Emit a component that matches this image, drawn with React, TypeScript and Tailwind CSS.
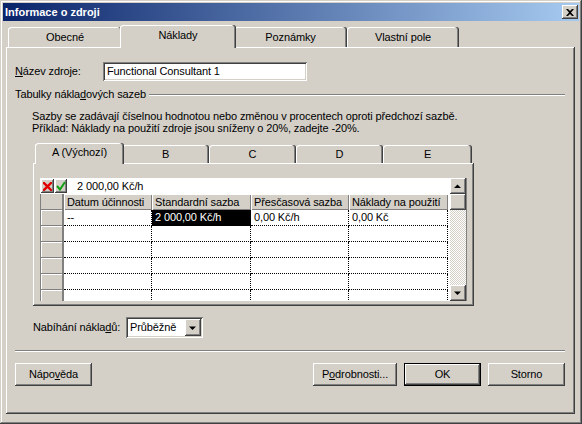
import React from "react";

const RAISED =
  "shadow-[inset_-1px_-1px_#404040,inset_1px_1px_#ffffff,inset_-2px_-2px_#808080,inset_2px_2px_#d4d0c8]";
const SUNKEN =
  "shadow-[inset_1px_1px_#808080,inset_-1px_-1px_#ffffff,inset_2px_2px_#404040,inset_-2px_-2px_#d4d0c8]";
const TAB =
  "shadow-[inset_-1px_0_#404040,inset_-2px_0_#808080,inset_1px_1px_#ffffff]";
const PANEL =
  "shadow-[inset_-1px_-1px_#404040,inset_1px_1px_#ffffff,inset_-2px_-2px_#808080]";

function Tab({
  label,
  w,
  selected,
  first,
}: {
  label: string;
  w: string;
  selected?: boolean;
  first?: boolean;
}) {
  if (selected) {
    return (
      <div
        className={`${w} ${first ? "" : "-ml-[2px]"} -mr-[2px] h-[23px] -mb-px relative z-10 bg-[#d4d0c8] rounded-t-[3px] ${TAB} flex items-center justify-center pb-[3px]`}
      >
        {label}
      </div>
    );
  }
  return (
    <div
      className={`${w} h-[20px] bg-[#d4d0c8] rounded-t-[3px] ${TAB} flex items-center justify-center`}
    >
      {label}
    </div>
  );
}

function InnerTab({
  label,
  w,
  selected,
}: {
  label: string;
  w: string;
  selected?: boolean;
}) {
  if (selected) {
    return (
      <div
        className={`${w} ml-[2px] -mr-[2px] h-[21px] -mb-px relative z-10 bg-[#d4d0c8] rounded-t-[3px] ${TAB} flex items-center justify-center pb-[2px]`}
      >
        {label}
      </div>
    );
  }
  return (
    <div
      className={`${w} h-[18px] bg-[#d4d0c8] rounded-t-[3px] ${TAB} flex items-center justify-center`}
    >
      {label}
    </div>
  );
}

function TriUp() {
  return (
    <svg width="16" height="16" viewBox="0 0 16 16">
      <polygon points="4,10 11,10 7.5,6.5" fill="#000" />
    </svg>
  );
}
function TriDown({ size = 16 }: { size?: number }) {
  return (
    <svg width={size} height={size} viewBox="0 0 16 16">
      <polygon points="4,6.5 11,6.5 7.5,10" fill="#000" />
    </svg>
  );
}

function Button({
  children,
  w,
  def,
}: {
  children: React.ReactNode;
  w: string;
  def?: boolean;
}) {
  if (def) {
    return (
      <div className={`${w} h-[23px] border border-black`}>
        <div
          className={`w-full h-full bg-[#d4d0c8] ${RAISED} flex items-center justify-center`}
        >
          {children}
        </div>
      </div>
    );
  }
  return (
    <div
      className={`${w} h-[23px] bg-[#d4d0c8] ${RAISED} flex items-center justify-center`}
    >
      {children}
    </div>
  );
}

const COLS = [
  { w: "w-[88px]", h: "Datum účinnosti", v: "--" },
  { w: "w-[99px]", h: "Standardní sazba", v: "2 000,00 Kč/h", sel: true },
  { w: "w-[98px]", h: "Přesčasová sazba", v: "0,00 Kč/h" },
  { w: "w-[99px]", h: "Náklady na použití", v: "0,00 Kč" },
];

function Grid() {
  const rows = [0, 1, 2, 3, 4, 5];
  return (
    <div className="ml-[7px] mt-[15px] w-[427px] h-[123px] flex bg-white overflow-hidden">
      <div className="w-[410px] flex flex-col">
        {/* edit bar */}
        <div className="h-[16px] flex items-center shrink-0">
          <div
            className={`ml-[1px] w-[13px] h-[14px] bg-[#d4d0c8] ${RAISED} flex items-center justify-center`}
          >
            <svg width="9" height="9" viewBox="0 0 9 9">
              <path
                d="M1 1 L8 8 M8 1 L1 8"
                stroke="#e00000"
                strokeWidth="2.4"
                strokeLinecap="square"
              />
            </svg>
          </div>
          <div
            className={`ml-[1px] w-[12px] h-[14px] bg-[#d4d0c8] ${RAISED} flex items-center justify-center`}
          >
            <svg width="10" height="10" viewBox="0 0 10 10">
              <path
                d="M1 5 L4 8.5 L9 1"
                stroke="#10a010"
                strokeWidth="2"
                fill="none"
              />
            </svg>
          </div>
          <span className="ml-[10px]">2 000,00 Kč/h</span>
        </div>
        {/* header */}
        <div className="h-[16px] flex shrink-0">
          <div className="w-[24px] h-full bg-[#d4d0c8] border-l border-[#808080] border-r-2 border-r-[#808080] shadow-[inset_0_-1px_#808080]" />
          {COLS.map((c) => (
            <div
              key={c.h}
              className={`${c.w} h-full bg-[#d4d0c8] shadow-[inset_1px_1px_#ffffff,inset_-1px_-1px_#808080] pl-[3px] flex items-center whitespace-nowrap overflow-hidden`}
            >
              {c.h}
            </div>
          ))}
        </div>
        {rows.map((r) => (
          <div key={r} className="h-[16px] flex shrink-0">
            <div className="w-[24px] h-full bg-[#d4d0c8] border-l border-[#808080] border-r-2 border-r-[#808080] border-b border-b-[#808080] shadow-[inset_1px_1px_#ffffff]" />
            {COLS.map((c) => (
              <div
                key={c.h}
                className={`${c.w} h-full border-r border-b border-dotted border-black pl-[3px] flex items-center whitespace-nowrap ${
                  r === 0 && c.sel ? "bg-black text-white" : ""
                }`}
              >
                {r === 0 ? c.v : ""}
              </div>
            ))}
          </div>
        ))}
      </div>
      {/* scrollbar */}
      <div className="w-[16px] h-full flex flex-col">
        <div className={`h-[16px] bg-[#d4d0c8] ${RAISED}`}>
          <TriUp />
        </div>
        <div className={`h-[16px] bg-[#d4d0c8] ${RAISED}`} />
        <div className="flex-1 bg-[repeating-conic-gradient(#ffffff_0%_25%,#d4d0c8_0%_50%)] bg-[length:2px_2px]" />
        <div className={`h-[16px] bg-[#d4d0c8] ${RAISED}`}>
          <TriDown />
        </div>
      </div>
      <div className="w-[1px] h-full bg-[#808080]" />
    </div>
  );
}

export default function App() {
  return (
    <div className="w-[582px] h-[424px] bg-[#d4d0c8] p-[3px] flex flex-col shadow-[inset_-1px_-1px_#404040,inset_1px_1px_#d4d0c8,inset_-2px_-2px_#808080,inset_2px_2px_#ffffff] font-['Liberation_Sans',Arial,sans-serif] text-[11px] tracking-[-0.12px] text-black leading-[13px]">
      {/* title bar */}
      <div className="h-[18px] shrink-0 flex items-center justify-between bg-[linear-gradient(to_right,#0a246a,#a6caf0)] pl-[2px] pr-[1px]">
        <span className="text-white font-bold text-[11px] tracking-normal">Informace o zdroji</span>
        <div
          className={`w-[16px] h-[14px] bg-[#d4d0c8] ${RAISED} flex items-center justify-center`}
        >
          <svg width="8" height="7" viewBox="0 0 8 7">
            <path
              d="M0 0h2l2 2 2-2h2l-3 3.5 3 3.5h-2l-2-2-2 2h-2l3-3.5z"
              fill="#000"
            />
          </svg>
        </div>
      </div>

      {/* tabs */}
      <div className="mt-[4px] ml-[3px] flex flex-col">
        <div className="h-[22px] flex items-end pl-[2px]">
          <Tab label="Obecné" w="w-[114px]" />
          <Tab label="Náklady" w="w-[116px]" selected />
          <Tab label="Poznámky" w="w-[113px]" />
          <Tab label="Vlastní pole" w="w-[112px]" />
        </div>

        {/* panel */}
        <div
          className={`w-[569px] h-[367px] bg-[#d4d0c8] ${PANEL} flex flex-col pl-[9px] pr-[10px]`}
        >
          {/* name row */}
          <div className="mt-[15px] h-[19px] flex items-center">
            <div className="w-[88px]">
              <u>N</u>ázev zdroje:
            </div>
            <div
              className={`w-[204px] h-[19px] bg-white ${SUNKEN} flex items-center pl-[4px]`}
            >
              Functional Consultant 1
            </div>
          </div>

          {/* group label */}
          <div className="mt-[7px] h-[13px] flex items-center">
            <span className="whitespace-nowrap">
              Tabulky nákla<u>d</u>ových sazeb
            </span>
            <div className="flex-1 ml-[3px] h-[2px] border-t border-t-[#808080] border-b border-b-white" />
          </div>

          {/* description */}
          <div className="mt-[9px] pl-[17px] leading-[12px]">
            <div>
              Sazby se zadávají číselnou hodnotou nebo změnou v procentech oproti
              předchozí sazbě.
            </div>
            <div>
              Příklad: Náklady na použití zdroje jsou sníženy o 20%, zadejte -20%.
            </div>
          </div>

          {/* inner tabs */}
          <div className="mt-[9px] ml-[18px] h-[20px] flex items-end">
            <InnerTab label="A (Výchozí)" w="w-[89px]" selected />
            <InnerTab label="B" w="w-[87px]" />
            <InnerTab label="C" w="w-[87px]" />
            <InnerTab label="D" w="w-[87px]" />
            <InnerTab label="E" w="w-[89px]" />
          </div>

          {/* inner panel */}
          <div
            className={`ml-[18px] w-[441px] h-[143px] shrink-0 bg-[#d4d0c8] ${PANEL} flex flex-col`}
          >
            <Grid />
          </div>

          {/* accrual row */}
          <div className="mt-[11px] ml-[18px] h-[21px] flex items-center">
            <div className="w-[93px] whitespace-nowrap">
              Nabíhání nákla<u>d</u>ů:
            </div>
            <div
              className={`w-[77px] h-[21px] bg-white ${SUNKEN} flex items-center pl-[4px] pr-[2px]`}
            >
              <span className="flex-1">Průběžně</span>
              <div className={`w-[16px] h-[17px] bg-[#d4d0c8] ${RAISED} flex items-center justify-center`}>
                <TriDown />
              </div>
            </div>
          </div>

          {/* separator */}
          <div className="mt-[12px] h-[2px] border-t border-t-[#808080] border-b border-b-white" />

          {/* buttons */}
          <div className="mt-[11px] h-[23px] flex">
            <Button w="w-[77px]">
              Nápo<u>v</u>ěda
            </Button>
            <div className="flex-1" />
            <Button w="w-[84px]">
              P<u>o</u>drobnosti...
            </Button>
            <div className="w-[7px]" />
            <Button w="w-[77px]" def>
              OK
            </Button>
            <div className="w-[7px]" />
            <Button w="w-[77px]">Storno</Button>
          </div>
        </div>
      </div>
    </div>
  );
}
